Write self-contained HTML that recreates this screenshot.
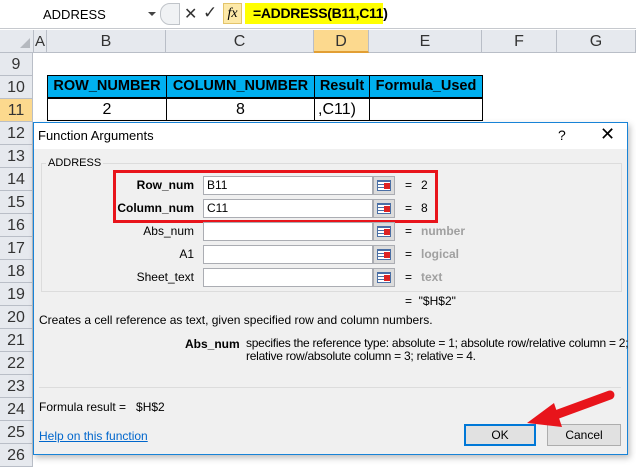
<!DOCTYPE html>
<html><head><style>
*{margin:0;padding:0;box-sizing:border-box}
body{width:636px;height:466px;overflow:hidden;background:#fff;font-family:"Liberation Sans",sans-serif;position:relative}
.a{position:absolute}
.rh{position:absolute;left:0;width:33px;height:23px;background:#e6e9ee;border-bottom:1px solid #b9bec7;border-right:1px solid #b9bec7;font-size:16px;color:#333;text-align:center;line-height:23px}
.ch{position:absolute;top:30px;height:23px;background:#e6e9ee;border-right:1px solid #b9bec7;border-bottom:1px solid #b9bec7;font-size:16px;color:#333;text-align:center;line-height:23px}
.th{position:absolute;top:75px;height:23px;background:#00b0f0;border:1px solid #000;font-weight:bold;font-size:14.5px;text-align:center;line-height:21px}
.td{position:absolute;top:98px;height:23px;border:1px solid #000;font-size:16px;text-align:center;line-height:21px}
.lbl{position:absolute;width:160px;left:34px;text-align:right;font-size:12px}
.inp{position:absolute;left:203px;width:170px;height:19px;background:#fff;border:1px solid #abadb3;font-size:12px;padding-left:3px;line-height:17px}
.btn{position:absolute;left:373px;width:22px;height:19px;background:#dcdcdc;border:1px solid #abadb3}
.btn i{position:absolute;left:3px;top:3px;width:14px;height:11px;background:repeating-linear-gradient(#4a6fa5 0 1px,#fff 1px 3px);border:1px solid #4a6fa5}
.btn b{position:absolute;left:10px;top:6px;width:6px;height:6px;background:#d22}
.eq{position:absolute;left:405px;font-size:12px}
.val{position:absolute;left:421px;font-size:12px}
.gr{color:#a0a0a0;font-weight:bold}
</style></head><body>
<div class="a" style="left:0;top:0;width:636px;height:29px;background:#fff;border-bottom:1px solid #c6c9ce"></div>
<div class="a" style="left:43px;top:7px;font-size:13px">ADDRESS</div>
<div class="a" style="left:148px;top:12px;border-left:4px solid transparent;border-right:4px solid transparent;border-top:4px solid #444"></div>
<div class="a" style="left:160px;top:3px;width:20px;height:22px;border-radius:10px 0 0 10px;border:1px solid #c0c4c9;background:#f0f2f4"></div>
<div class="a" style="left:184px;top:4px;font-size:16px;color:#333">✕</div>
<div class="a" style="left:203px;top:3px;font-size:17px;color:#333">✓</div>
<div class="a" style="left:223px;top:3px;width:19px;height:21px;background:#fde9a8;border:1px solid #e3c46a;font-family:'Liberation Serif',serif;font-style:italic;font-size:14px;text-align:center;line-height:19px">fx</div>
<div class="a" style="left:245px;top:3px;width:138px;height:21px;background:#ffff00"></div>
<div class="a" style="left:253px;top:5px;font-size:14px;font-weight:bold;letter-spacing:-0.3px">=ADDRESS(B11,C11)</div>
<div class="ch" style="left:0;width:34px"></div>
<div class="a" style="left:20px;top:38px;border-left:10px solid transparent;border-bottom:10px solid #b5b9bf"></div>
<div class="ch" style="left:34px;width:13px;font-size:15px">A</div>
<div class="ch" style="left:47px;width:119px">B</div>
<div class="ch" style="left:166px;width:148px">C</div>
<div class="ch" style="left:314px;width:55px;background:#fcd98e;border-bottom:2px solid #e29f34">D</div>
<div class="ch" style="left:369px;width:113px">E</div>
<div class="ch" style="left:482px;width:75px">F</div>
<div class="ch" style="left:557px;width:79px">G</div>
<div class="rh" style="top:53px">9</div>
<div class="rh" style="top:76px">10</div>
<div class="rh" style="top:99px;background:#fcd98e">11</div>
<div class="rh" style="top:122px">12</div>
<div class="rh" style="top:145px">13</div>
<div class="rh" style="top:168px">14</div>
<div class="rh" style="top:191px">15</div>
<div class="rh" style="top:214px">16</div>
<div class="rh" style="top:237px">17</div>
<div class="rh" style="top:260px">18</div>
<div class="rh" style="top:283px">19</div>
<div class="rh" style="top:306px">20</div>
<div class="rh" style="top:329px">21</div>
<div class="rh" style="top:352px">22</div>
<div class="rh" style="top:375px">23</div>
<div class="rh" style="top:398px">24</div>
<div class="rh" style="top:421px">25</div>
<div class="rh" style="top:444px">26</div>
<div class="th" style="left:47px;width:120px">ROW_NUMBER</div>
<div class="th" style="left:166px;width:149px">COLUMN_NUMBER</div>
<div class="th" style="left:314px;width:56px">Result</div>
<div class="th" style="left:369px;width:114px">Formula_Used</div>
<div class="td" style="left:47px;width:120px">2</div>
<div class="td" style="left:166px;width:149px">8</div>
<div class="td" style="left:314px;width:56px;text-align:left;padding-left:3px">,C11)</div>
<div class="td" style="left:369px;width:114px"></div>
<div class="a" style="left:33px;top:122px;width:595px;height:333px;background:#f0f0f0;border:1px solid #1883d7;box-shadow:2px 3px 6px rgba(0,0,0,.25)">
 <div class="a" style="left:0;top:0;width:593px;height:26px;background:#fff"></div>
 <div class="a" style="left:4px;top:5px;font-size:13px">Function Arguments</div>
 <div class="a" style="left:524px;top:4px;font-size:14px">?</div>
 <div class="a" style="left:566px;top:1px;font-size:18px;font-weight:300">✕</div>
 <div class="a" style="left:7px;top:40px;width:581px;height:129px;border:1px solid #dcdcdc"></div>
 <div class="a" style="left:12px;top:34px;font-size:11px;background:#f0f0f0;padding:0 2px">ADDRESS</div>
</div>
<div class="a" style="left:113px;top:170px;width:325px;height:53px;border:3px solid #e8141b"></div>
<div class="lbl" style="top:178px;font-weight:bold">Row_num</div>
<div class="lbl" style="top:201px;font-weight:bold">Column_num</div>
<div class="lbl" style="top:224px">Abs_num</div>
<div class="lbl" style="top:247px">A1</div>
<div class="lbl" style="top:270px">Sheet_text</div>
<div class="inp" style="top:176px">B11</div><div class="btn" style="top:176px"><i></i><b></b></div>
<div class="inp" style="top:199px">C11</div><div class="btn" style="top:199px"><i></i><b></b></div>
<div class="inp" style="top:222px"></div><div class="btn" style="top:222px"><i></i><b></b></div>
<div class="inp" style="top:245px"></div><div class="btn" style="top:245px"><i></i><b></b></div>
<div class="inp" style="top:268px"></div><div class="btn" style="top:268px"><i></i><b></b></div>
<div class="eq" style="top:178px">=</div><div class="val" style="top:178px">2</div>
<div class="eq" style="top:201px">=</div><div class="val" style="top:201px">8</div>
<div class="eq" style="top:224px">=</div><div class="val gr" style="top:224px">number</div>
<div class="eq" style="top:247px">=</div><div class="val gr" style="top:247px">logical</div>
<div class="eq" style="top:270px">=</div><div class="val gr" style="top:270px">text</div>
<div class="eq" style="top:294px">= &nbsp;"$H$2"</div>
<div class="a" style="left:39px;top:313px;font-size:12px">Creates a cell reference as text, given specified row and column numbers.</div>
<div class="a" style="left:185px;top:337px;font-size:12px;font-weight:bold">Abs_num</div>
<div class="a" style="left:246px;top:337px;font-size:12px;line-height:13px;width:390px;white-space:nowrap;letter-spacing:-0.25px">specifies the reference type: absolute = 1; absolute row/relative column = 2;<br>relative row/absolute column = 3; relative = 4.</div>
<div class="a" style="left:39px;top:387px;width:582px;height:1px;background:#dcdcdc"></div>
<div class="a" style="left:39px;top:400px;font-size:12px">Formula result = &nbsp;&nbsp;$H$2</div>
<div class="a" style="left:39px;top:429px;font-size:12px;color:#0066cc;text-decoration:underline">Help on this function</div>
<div class="a" style="left:464px;top:424px;width:72px;height:22px;border:2px solid #0078d7;background:#e1e1e1;font-size:12px;text-align:center;line-height:18px">OK</div>
<div class="a" style="left:547px;top:424px;width:74px;height:22px;border:1px solid #adadad;background:#e1e1e1;font-size:12px;text-align:center;line-height:20px">Cancel</div>
<svg class="a" style="left:510px;top:385px" width="110" height="50"><path d="M100 10 L40 32" stroke="#e8141b" stroke-width="9" stroke-linecap="round"/><path d="M17 38 L44 18 L52 42 Z" fill="#e8141b"/></svg>
</body></html>
